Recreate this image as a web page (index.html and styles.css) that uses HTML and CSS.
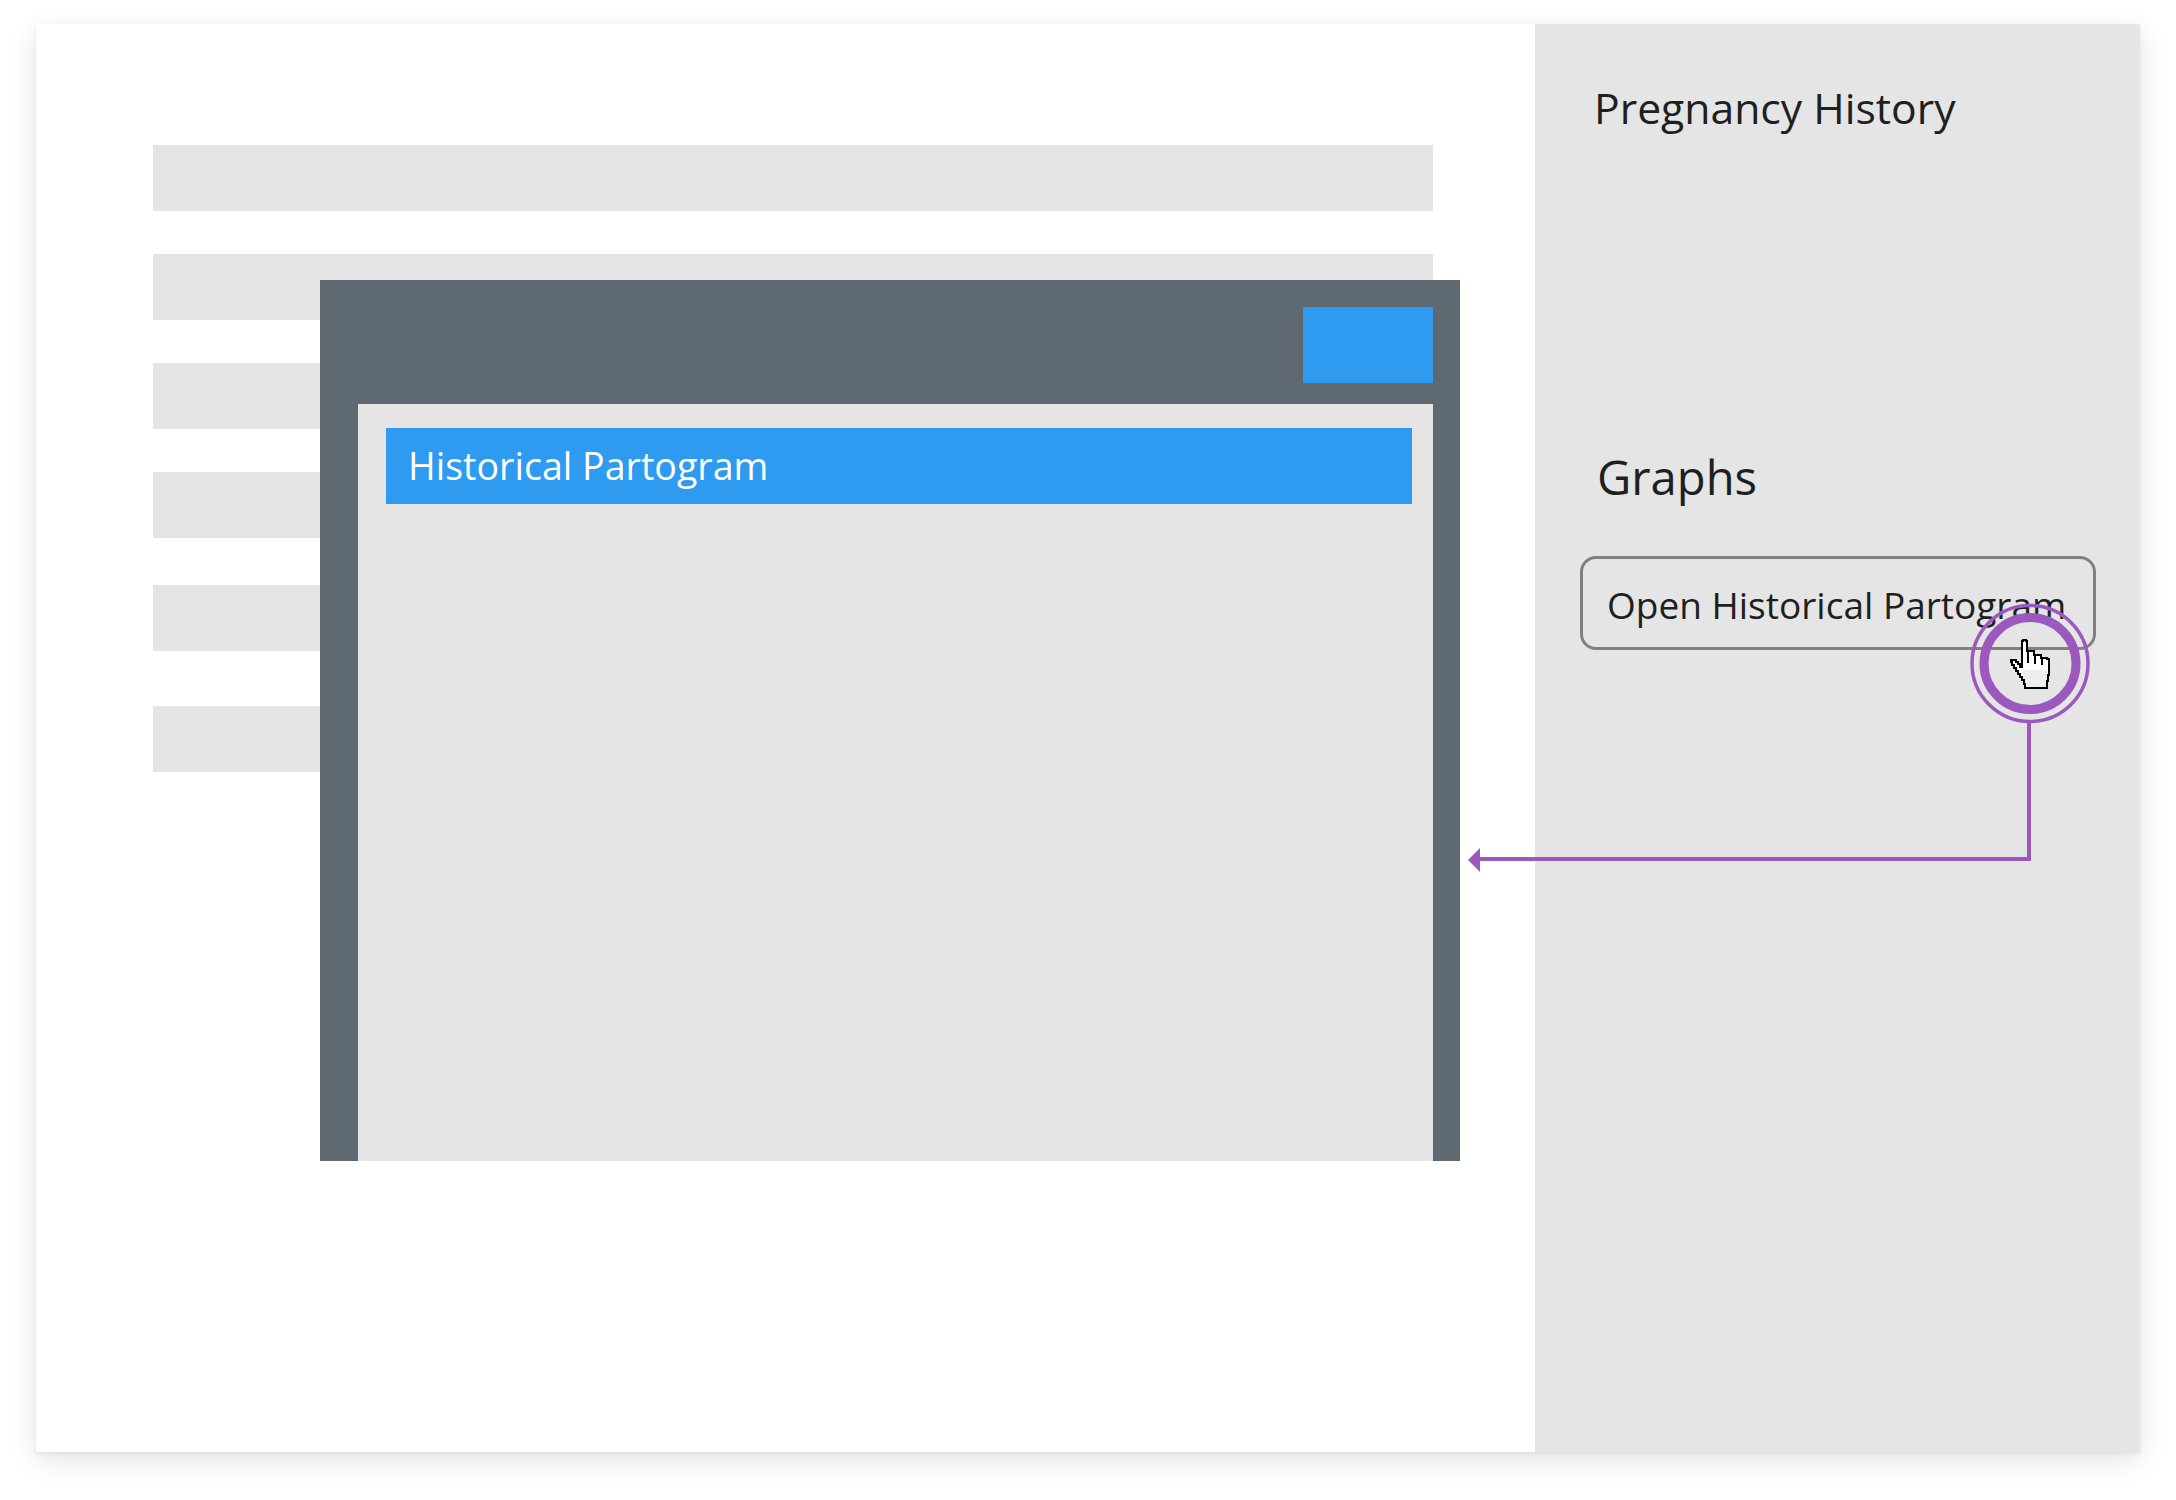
FILE: index.html
```html
<!DOCTYPE html>
<html lang="en">
<head>
<meta charset="utf-8">
<title>Historical Partogram</title>
<link rel="stylesheet" href="styles.css">
</head>
<body>
<div class="card">
  <main class="main">
    <div class="bar"></div>
    <div class="bar"></div>
    <div class="bar"></div>
    <div class="bar"></div>
    <div class="bar bar-fifth"></div>
    <div class="bar bar-sixth"></div>
    <section class="window">
      <div class="window-head"><div class="window-btn"></div></div>
      <div class="window-body">
        <div class="window-title">Historical Partogram</div>
      </div>
    </section>
  </main>
  <aside class="panel">
    <h2 class="panel-heading">Pregnancy History</h2>
    <h2 class="panel-heading graphs">Graphs</h2>
    <button class="open-btn">Open Historical Partogram</button>
  </aside>
  <svg class="annotation" width="2176" height="1500" viewBox="0 0 2176 1500" fill="none">
    <circle cx="2030" cy="663.5" r="58" stroke="#9b59bd" stroke-width="3.5"/>
    <circle cx="2030" cy="663.5" r="46" stroke="#9b59bd" stroke-width="9"/>
    <path d="M2029 722V859H1478" stroke="#9b59bd" stroke-width="4"/>
    <path d="M1468 860L1480 848V872Z" fill="#9b59bd"/>
    <g class="hand" shape-rendering="crispEdges">
      <path d="M2023 640H2026V641H2027V651H2034V655H2041V658H2047V659H2049V675H2048V681H2047V688H2025V684H2024V680H2022V677H2020V674H2018V671H2016V668H2014V665H2012V662H2011V660H2016V662H2018V664H2020V667H2022V641H2023Z" fill="#fff" stroke="#000" stroke-width="2"/>
      <path d="M2023 670H2047V680H2046V687H2026V683H2025V679H2023Z" fill="#eeeeee"/>
      <path d="M2028 652V663M2035 656V664M2042 659V665" stroke="#000" stroke-width="2"/>
    </g>
  </svg>
</div>
</body>
</html>
```
FILE: styles.css
```css
* { box-sizing: border-box; }
html, body { margin: 0; padding: 0; background: #fff; }
body { width: 2176px; height: 1500px; overflow: hidden; padding: 24px 36px 48px; font-family: "Open Sans", sans-serif; }
.card { display: flex; width: 2104px; height: 1428px; background: #fff; box-shadow: 0 2px 4px rgba(0,0,0,.06), 0 8px 26px rgba(0,0,0,.11); }
.main { position: relative; flex: 0 0 1499px; padding: 121px 0 0 117px; }
.bar { width: 1279.5px; height: 66px; margin-bottom: 43px; background: #e5e5e5; }
.bar-fifth { margin-top: 47px; }
.bar-sixth { margin-top: 55px; }
.window { position: absolute; left: 284px; top: 256px; width: 1140px; height: 881px; display: flex; flex-direction: column; padding: 0 27.5px 0 38px; background: #5f6972; }
.window-head { flex: 0 0 124px; display: flex; justify-content: flex-end; padding-top: 27px; }
.window-btn { width: 130px; height: 76px; background: #2e9bf0; }
.window-body { flex: 1; padding: 24px 20.5px 0 28px; background: #e5e5e5; }
.window-title { height: 76px; padding-left: 22px; background: #2e9bf0; color: #fff; font-size: 37.6px; line-height: 75px; }
.panel { flex: 1; background: #e5e5e5; padding: 55px 0 0 45px; color: #1d1f21; }
.panel-heading { margin: 0 0 0 14px; font-size: 42.7px; font-weight: 400; line-height: 58px; }
.graphs { margin: 308px 0 0 17px; font-size: 47.2px; line-height: 64px; }
.open-btn { display: block; width: 516px; height: 94px; margin: 47px 0 0 0; padding: 2px 0 0 24px; border: 3px solid #808080; border-radius: 16px; background: transparent; color: #1d1f21; font: 400 37px/1 "Open Sans", sans-serif; text-align: left; }
.annotation { position: absolute; left: 0; top: 0; pointer-events: none; }
```
